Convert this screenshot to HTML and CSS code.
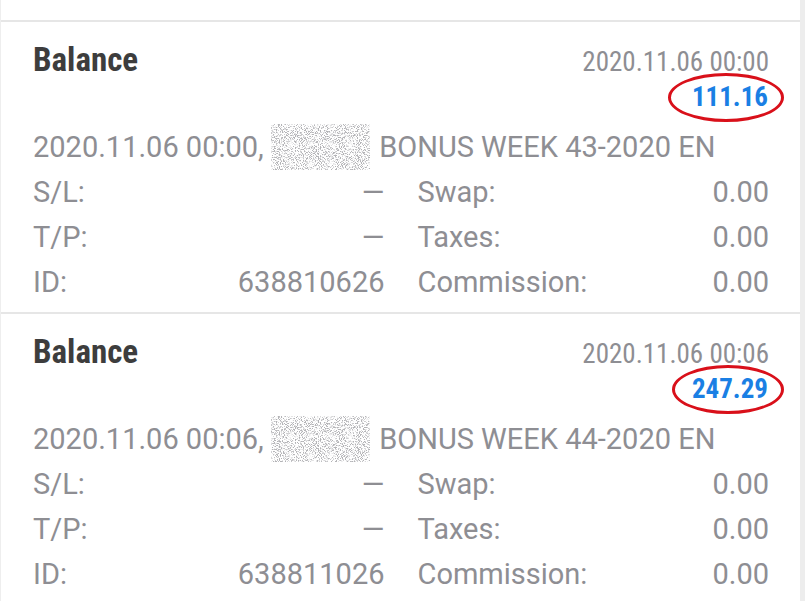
FILE: index.html
```html
<!DOCTYPE html>
<html>
<head>
<meta charset="utf-8">
<link rel="stylesheet" href="styles.css">
</head>
<body>
<svg class="defs" width="0" height="0" aria-hidden="true">
  <filter id="noise" x="0" y="0" width="100%" height="100%">
    <feTurbulence type="fractalNoise" baseFrequency="0.95" numOctaves="2" seed="7" result="t"/>
    <feColorMatrix in="t" type="matrix" values="0 0 0 0 0.45  0 0 0 0 0.45  0 0 0 0 0.47  6 0 0 0 -2.9"/>
  </filter>
</svg>
<div class="page">
  <div class="spacer"></div>

  <div class="card">
    <div class="head">
      <div class="title">Balance</div>
      <div class="right">
        <div class="time">2020.11.06 00:00</div>
        <div class="amount"><span class="ring">111.16</span></div>
      </div>
    </div>
    <div class="comment">2020.11.06 00:00, <svg class="blur" width="99" height="46"><rect width="99" height="46" filter="url(#noise)"/></svg> BONUS WEEK 43-2020 EN</div>
    <div class="grid">
      <div class="cell"><span>S/L:</span><span>—</span></div>
      <div class="cell"><span>Swap:</span><span>0.00</span></div>
      <div class="cell"><span>T/P:</span><span>—</span></div>
      <div class="cell"><span>Taxes:</span><span>0.00</span></div>
      <div class="cell"><span>ID:</span><span>638810626</span></div>
      <div class="cell"><span>Commission:</span><span>0.00</span></div>
    </div>
  </div>

  <div class="card">
    <div class="head">
      <div class="title">Balance</div>
      <div class="right">
        <div class="time">2020.11.06 00:06</div>
        <div class="amount"><span class="ring ring2">247.29</span></div>
      </div>
    </div>
    <div class="comment">2020.11.06 00:06, <svg class="blur" width="99" height="46"><rect width="99" height="46" filter="url(#noise)"/></svg> BONUS WEEK 44-2020 EN</div>
    <div class="grid">
      <div class="cell"><span>S/L:</span><span>—</span></div>
      <div class="cell"><span>Swap:</span><span>0.00</span></div>
      <div class="cell"><span>T/P:</span><span>—</span></div>
      <div class="cell"><span>Taxes:</span><span>0.00</span></div>
      <div class="cell"><span>ID:</span><span>638811026</span></div>
      <div class="cell"><span>Commission:</span><span>0.00</span></div>
    </div>
  </div>
</div>
</body>
</html>
```

FILE: styles.css
```css
html, body {
  margin: 0;
  padding: 0;
}
body {
  background: #ededed;
  font-family: Roboto, "Liberation Sans", sans-serif;
  overflow: hidden;
}
.defs {
  position: absolute;
  width: 0;
  height: 0;
}
.page {
  width: 799px;
  height: 601px;
  background: #ffffff;
  border-left: 1px solid #eeeeee;
  overflow: hidden;
}
.spacer {
  height: 20px;
}
.card {
  border-top: 2px solid #e6e6e6;
  padding: 18px 31px 7px 32px;
}
.head {
  display: flex;
  justify-content: space-between;
  align-items: baseline;
}
.title {
  font-family: "Roboto Condensed", Roboto, sans-serif;
  font-stretch: 75%;
  font-weight: 700;
  font-size: 33px;
  line-height: 40px;
  color: #3d3d3d;
}
.right {
  display: flex;
  flex-direction: column;
  align-items: flex-end;
}
.time {
  font-family: "Roboto Condensed", Roboto, sans-serif;
  font-stretch: 75%;
  font-size: 27px;
  line-height: 28px;
  color: #8e8e93;
}
.amount {
  margin-top: -3px;
  margin-right: -15px;
}
.ring {
  display: inline-block;
  font-family: "Roboto Condensed", Roboto, sans-serif;
  font-stretch: 75%;
  font-weight: 700;
  font-size: 27px;
  line-height: 43px;
  color: #1a7fe4;
  border: 3px solid #d9101a;
  border-radius: 50%;
  padding: 0 13px 0 21px;
}
.ring2 {
  padding-left: 17px;
}
.comment {
  margin-top: 2px;
  font-size: 29px;
  line-height: 45px;
  color: #8e8e93;
  white-space: nowrap;
}
.blur {
  vertical-align: -13px;
  margin-right: 2px;
}
.grid {
  display: grid;
  grid-template-columns: 1fr 1fr;
  column-gap: 33px;
  font-size: 29px;
  line-height: 45px;
  color: #8e8e93;
}
.cell {
  display: flex;
  justify-content: space-between;
}
```
